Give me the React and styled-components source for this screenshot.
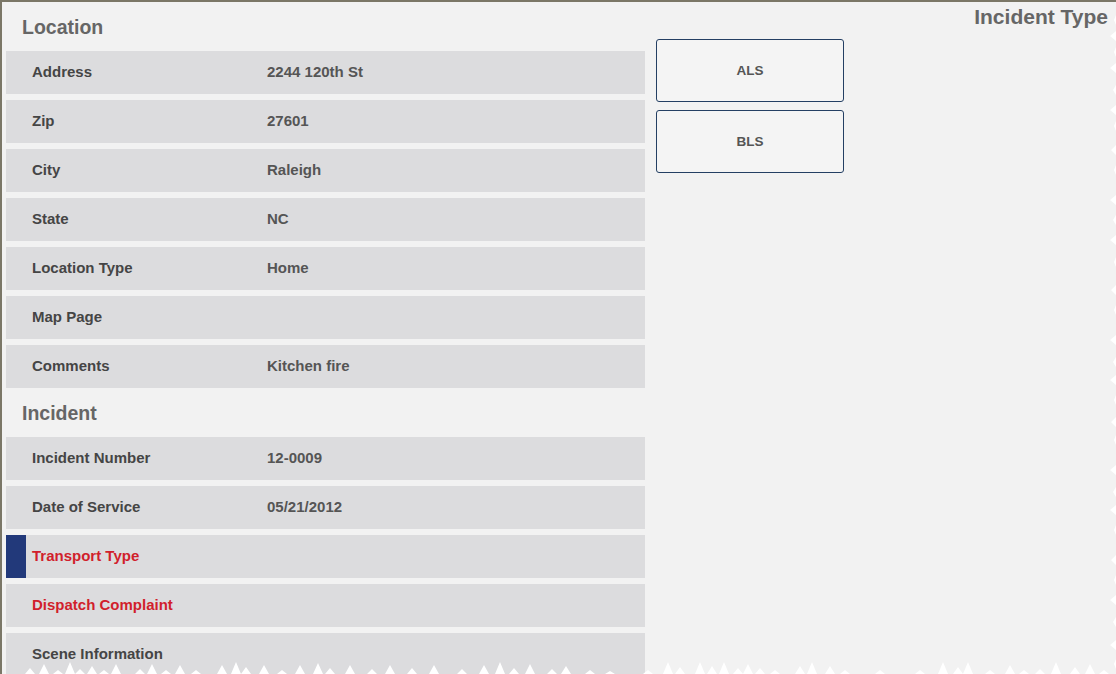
import React from 'react';
import styled, { createGlobalStyle } from 'styled-components';

const GlobalStyle = createGlobalStyle`
  html, body {
    margin: 0;
    padding: 0;
    background: #ffffff;
  }
  * { box-sizing: border-box; }
`;

const location = [
  { label: 'Address', value: '2244 120th St' },
  { label: 'Zip', value: '27601' },
  { label: 'City', value: 'Raleigh' },
  { label: 'State', value: 'NC' },
  { label: 'Location Type', value: 'Home' },
  { label: 'Map Page', value: '' },
  { label: 'Comments', value: 'Kitchen fire' },
];

const incident = [
  { label: 'Incident Number', value: '12-0009' },
  { label: 'Date of Service', value: '05/21/2012' },
  { label: 'Transport Type', value: '', required: true, active: true },
  { label: 'Dispatch Complaint', value: '', required: true },
  { label: 'Scene Information', value: '' },
];

// jagged "torn paper" edge of the screenshot, bottom and right
const bottomPeaks = [
  [30, 6], [44, 10], [58, 4], [70, 12], [80, 5], [92, 8], [104, 4], [116, 10],
  [140, 5], [152, 10], [166, 4], [180, 9], [196, 4], [222, 9], [236, 12], [246, 7],
  [264, 9], [282, 4], [300, 9], [318, 11], [330, 6], [350, 9], [372, 5], [390, 9],
  [412, 6], [434, 9], [462, 5], [484, 9], [500, 12], [514, 6], [530, 10], [552, 5],
  [566, 8], [590, 4], [610, 3], [648, 4], [668, 12], [680, 7], [700, 12], [712, 8],
  [724, 12], [738, 6], [748, 10], [760, 6], [775, 4], [800, 8], [812, 12], [830, 8],
  [845, 4], [880, 4], [920, 4], [943, 12], [958, 7], [968, 12], [990, 4], [1010, 9],
  [1024, 4], [1040, 5], [1056, 12], [1075, 7], [1090, 10], [1104, 4],
];

const rightPeaks = [
  [20, 2], [36, 6], [52, 2], [68, 6], [90, 3], [110, 6], [126, 2], [150, 5],
  [170, 2], [200, 6], [220, 3], [240, 6], [262, 2], [290, 5], [310, 2], [340, 6],
  [362, 3], [380, 6], [400, 2], [422, 5], [440, 2], [470, 6], [492, 3], [510, 6],
  [530, 2], [560, 5], [580, 2], [600, 6], [622, 3], [645, 6], [664, 2],
];

function TornEdges() {
  const bottom =
    '0,674 ' +
    bottomPeaks.map(([x, h]) => `${x - 5},674 ${x},${674 - h} ${x + 5},674`).join(' ') +
    ' 1116,674';
  const right =
    '1116,14 ' +
    rightPeaks.map(([y, w]) => `1116,${y - 5} ${1116 - w},${y} 1116,${y + 5}`).join(' ') +
    ' 1116,674';
  return (
    <Edges viewBox="0 0 1116 674" width="1116" height="674">
      <polygon points={bottom} fill="#ffffff" />
      <polygon points={right} fill="#ffffff" />
    </Edges>
  );
}

function Section({ title, rows }) {
  return (
    <>
      <Heading>{title}</Heading>
      {rows.map((r) => (
        <Row key={r.label} $active={r.active}>
          <Label $required={r.required}>{r.label}</Label>
          <Value>{r.value}</Value>
        </Row>
      ))}
    </>
  );
}

export default function App() {
  return (
    <>
      <GlobalStyle />
      <Frame>
        <Form>
          <Section title="Location" rows={location} />
          <Section title="Incident" rows={incident} />
        </Form>
        <Side>
          <SideTitle>Incident Type</SideTitle>
          <Options>
            <Option>ALS</Option>
            <Option>BLS</Option>
          </Options>
        </Side>
        <TornEdges />
      </Frame>
    </>
  );
}

const Frame = styled.div`
  position: relative;
  width: 1116px;
  height: 674px;
  overflow: hidden;
  background: #f2f2f2;
  border-top: 2px solid #7b7767;
  border-left: 2px solid #7b7767;
  display: grid;
  grid-template-columns: 639px 1fr;
  column-gap: 11px;
  padding: 6px 0 0 4px;
  font-family: "Liberation Sans", Arial, sans-serif;
`;

const Form = styled.div`
  display: flex;
  flex-direction: column;
  gap: 6px;
`;

const Heading = styled.h2`
  margin: 0;
  height: 37px;
  display: flex;
  align-items: center;
  padding: 2px 0 0 16px;
  font-size: 19.5px;
  font-weight: bold;
  color: #666666;
`;

const Row = styled.div`
  flex: none;
  height: 43px;
  display: flex;
  align-items: center;
  padding: 0 0 2px 26px;
  background: #dcdcde;
  box-shadow: ${(p) => (p.$active ? 'inset 20px 0 0 #22397a' : 'none')};
  font-size: 15px;
  font-weight: bold;
`;

const Label = styled.span`
  width: 235px;
  color: ${(p) => (p.$required ? '#d11f2c' : '#454545')};
`;

const Value = styled.span`
  color: #555555;
`;

const Side = styled.div`
  display: flex;
  flex-direction: column;
`;

const SideTitle = styled.div`
  align-self: flex-end;
  margin: -2px 8px 0 0;
  height: 22px;
  line-height: 22px;
  font-size: 21px;
  font-weight: bold;
  color: #666666;
`;

const Options = styled.div`
  margin-top: 11px;
  display: flex;
  flex-direction: column;
  gap: 8px;
`;

const Option = styled.button`
  width: 188px;
  height: 63px;
  border: 1px solid #243f63;
  border-radius: 3px;
  background: #f4f4f4;
  font-family: inherit;
  font-size: 13.5px;
  font-weight: bold;
  color: #555555;
  cursor: pointer;
`;

const Edges = styled.svg`
  position: absolute;
  left: -2px;
  top: -2px;
  pointer-events: none;
`;
